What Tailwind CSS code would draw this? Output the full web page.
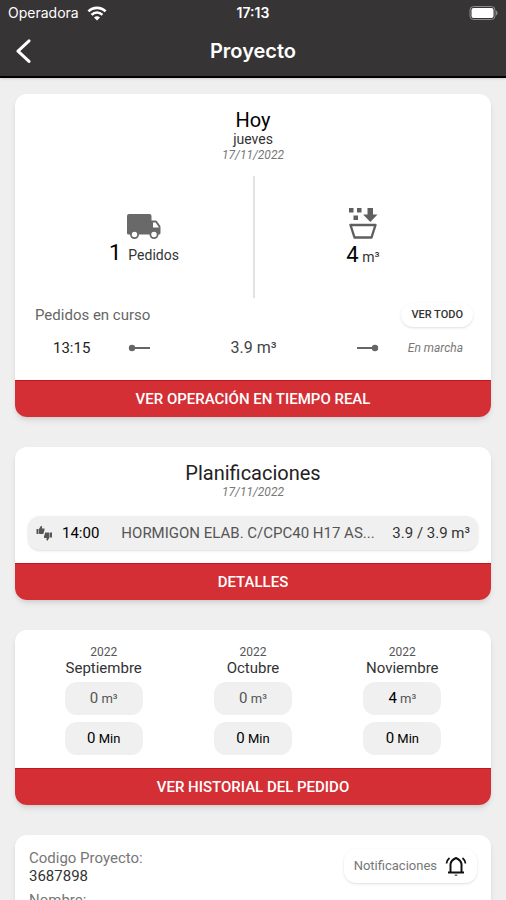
<!DOCTYPE html>
<html lang="es">
<head>
  <meta charset="UTF-8" />
  <meta name="viewport" content="width=device-width, initial-scale=1.0" />
  <title>Proyecto</title>
  <script src="https://cdn.jsdelivr.net/npm/@tailwindcss/browser@4"></script>
</head>
<body class="h-screen flex flex-col overflow-hidden bg-[#efefef] font-['Roboto',sans-serif] text-[#333]">

  <header class="shrink-0 bg-[#373435] text-white border-b-2 border-black shadow">
    <!-- barra de estado -->
    <div class="grid grid-cols-3 items-center h-[26px] px-2 font-['Inter',sans-serif] text-sm">
      <div class="flex items-center gap-2">
        <span>Operadora</span>
        <svg class="w-5 h-[15px]" viewBox="0 0 20 15" fill="none" stroke="currentColor" stroke-width="2.6">
          <path d="M1.4 5.4a12.2 12.2 0 0 1 17.2 0" />
          <path d="M4.6 8.8a7.6 7.6 0 0 1 10.8 0" />
          <path d="M10 14.6l-3-3.2a4.2 4.2 0 0 1 6 0z" fill="currentColor" stroke="none" />
        </svg>
      </div>
      <span class="text-center font-semibold">17:13</span>
      <svg class="w-[30px] h-[14px] justify-self-end" viewBox="0 0 30 14">
        <rect x="2" y="0.5" width="25" height="13" rx="3.5" fill="none" stroke="#8d8b8c" />
        <rect x="3.5" y="2" width="22" height="10" rx="2" fill="#fff" />
        <path d="M28 4.5c2 .8 2 4.2 0 5z" fill="#8d8b8c" />
      </svg>
    </div>
    <!-- título -->
    <div class="grid grid-cols-3 items-center h-[50px] px-3">
      <button type="button" aria-label="Volver" class="justify-self-start p-1">
        <svg class="w-4 h-6" viewBox="0 0 16 24" fill="none" stroke="currentColor" stroke-width="3" stroke-linecap="round" stroke-linejoin="round">
          <path d="M13 1.8L2 12.2l11 10.2" />
        </svg>
      </button>
      <h1 class="text-center text-xl leading-6 font-semibold font-['Inter',sans-serif]">Proyecto</h1>
    </div>
  </header>

  <main class="flex flex-col gap-[30px] px-[15px] pt-4">

    <!-- Hoy -->
    <section class="shrink-0 bg-white rounded-xl overflow-hidden shadow-md">
      <div class="pt-4 text-center">
        <h2 class="text-xl leading-5 text-black">Hoy</h2>
        <p class="text-sm leading-[18px]">jueves</p>
        <p class="text-xs leading-[14px] italic text-[#777]">17/11/2022</p>
      </div>
      <div class="grid grid-cols-2 h-[122px] mt-[14px]">
        <div class="flex flex-col items-center justify-end gap-0.5 pb-[31px] pl-5">
          <svg class="w-9 h-[26px]" viewBox="0 0 36 26" fill="#696969">
            <path d="M3 1h20.500a2 2 0 0 1 2 2v4.500h4a2 2 0 0 1 1.500.7l3 4.300a3 3 0 0 1 .5 1.600V20a1.600 1.600 0 0 1-1.600 1.600H2.500A1.500 1.500 0 0 1 1 20V3a2 2 0 0 1 2-2z" />
            <path d="M27 9.500v5h6l-3.400-5z" fill="#fff" />
            <circle cx="8.500" cy="21.500" r="3.600" fill="#fff" stroke="#696969" stroke-width="1.800" />
            <circle cx="28" cy="21.500" r="3.600" fill="#fff" stroke="#696969" stroke-width="1.800" />
          </svg>
          <p class="text-sm leading-[24px]"><span class="text-[22px] text-black">1</span>&nbsp; Pedidos</p>
        </div>
        <div class="flex flex-col items-center justify-end gap-1 pb-[29px] pr-[20px] border-l-2 border-[#e2e2e2]">
          <svg class="w-[30px] h-8" viewBox="0 0 30 32" fill="#5f5f5f">
            <rect x="1" y="1" width="4.500" height="4.500" />
            <rect x="9" y="1" width="4.500" height="4.500" />
            <rect x="5.500" y="8.500" width="4.500" height="4.500" />
            <path d="M19.500 1h5.500v6.500h4.500l-7.200 7.500-7.200-7.500h4.400z" />
            <path d="M2.500 18h25l-4 12.500h-17z" fill="none" stroke="#5f5f5f" stroke-width="2.400" stroke-linejoin="round" />
          </svg>
          <p class="text-sm leading-[24px]"><span class="text-[22px] text-black">4</span> m³</p>
        </div>
      </div>
      <div class="flex items-center justify-between pt-[5px] px-5">
        <h3 class="text-[15px] text-[#666]">Pedidos en curso</h3>
        <button type="button" class="h-6 px-[10px] -mr-0.5 rounded-full bg-white text-[11px] font-medium shadow">VER TODO</button>
      </div>
      <div class="grid grid-cols-[58px_1fr_64px] items-center h-[42px] pl-[28px] pr-5">
        <span class="pl-[10px] text-[15px] text-[#222]">13:15</span>
        <div class="grid grid-cols-[1fr_auto_1fr] items-center pl-[27px] pr-7 text-[#666]">
          <svg class="w-[22px] h-2" viewBox="0 0 22 8" fill="currentColor">
            <circle cx="4" cy="4" r="3.200" />
            <rect x="4" y="3" width="18" height="2" />
          </svg>
          <span class="text-base text-[#444]">3.9 m³</span>
          <svg class="w-[22px] h-2 justify-self-end" viewBox="0 0 22 8" fill="currentColor">
            <circle cx="18" cy="4" r="3.200" />
            <rect x="0" y="3" width="18" height="2" />
          </svg>
        </div>
        <span class="text-xs italic text-right pr-2 whitespace-nowrap text-[#777]">En marcha</span>
      </div>
      <button type="button" class="block w-full h-[37px] mt-[11px] bg-[#d32f35] border-t border-[#c4161d] text-white text-[15px] font-medium">VER OPERACIÓN EN TIEMPO REAL</button>
    </section>

    <!-- Planificaciones -->
    <section class="shrink-0 bg-white rounded-xl overflow-hidden shadow-md">
      <div class="pt-4 text-center">
        <h2 class="text-xl leading-5 text-[#222]">Planificaciones</h2>
        <p class="text-xs leading-[18px] italic text-[#777]">17/11/2022</p>
      </div>
      <div class="flex items-center h-[34px] mt-[15px] mx-[13px] px-2 rounded-xl bg-[#f0f0f0] shadow-sm text-[15px]">
        <svg class="w-4 h-4 shrink-0" viewBox="0 0 16 16" fill="#555">
          <path d="M.5 4h2v5h-2zM3 4L5 .8l1.200.700-.4 2H8.500v1.500L7.300 9H3.500L3 8.500z" />
          <path d="M16 12.500h-2v-5h2zM13.500 12.500l-2 3.200-1.200-.7.400-2H8v-1.500l1.200-4H13l.5.500z" />
        </svg>
        <span class="ml-[10px] text-black">14:00</span>
        <span class="ml-[22px] flex-1 truncate text-[#555]">HORMIGON ELAB. C/CPC40 H17 AS...</span>
        <span class="ml-3 whitespace-nowrap">3.9 / 3.9 m³</span>
      </div>
      <button type="button" class="block w-full h-[37px] mt-[13px] bg-[#d32f35] border-t border-[#c4161d] text-white text-[15px] font-medium">DETALLES</button>
    </section>

    <!-- Historial -->
    <section class="shrink-0 bg-white rounded-xl overflow-hidden shadow-md">
      <div class="grid grid-cols-3 px-[14px] pt-[14px] text-center">
        <div class="flex flex-col items-center">
          <p class="text-xs leading-4 text-[#555]">2022</p>
          <h3 class="text-[15px] leading-4">Septiembre</h3>
          <p class="w-[78px] mt-[6px] rounded-xl bg-[#f0f0f0] text-[13px] leading-8 text-[#555]"><span class="text-[15px]">0</span> m³</p>
          <p class="w-[78px] mt-[7px] rounded-xl bg-[#f0f0f0] text-[13px] leading-8 text-black"><span class="text-[15px]">0</span> Min</p>
        </div>
        <div class="flex flex-col items-center">
          <p class="text-xs leading-4 text-[#555]">2022</p>
          <h3 class="text-[15px] leading-4">Octubre</h3>
          <p class="w-[78px] mt-[6px] rounded-xl bg-[#f0f0f0] text-[13px] leading-8 text-[#555]"><span class="text-[15px]">0</span> m³</p>
          <p class="w-[78px] mt-[7px] rounded-xl bg-[#f0f0f0] text-[13px] leading-8 text-black"><span class="text-[15px]">0</span> Min</p>
        </div>
        <div class="flex flex-col items-center">
          <p class="text-xs leading-4 text-[#555]">2022</p>
          <h3 class="text-[15px] leading-4">Noviembre</h3>
          <p class="w-[78px] mt-[6px] rounded-xl bg-[#f0f0f0] text-[13px] leading-8 text-[#555]"><span class="text-[15px] text-black">4</span> m³</p>
          <p class="w-[78px] mt-[7px] rounded-xl bg-[#f0f0f0] text-[13px] leading-8 text-black"><span class="text-[15px]">0</span> Min</p>
        </div>
      </div>
      <button type="button" class="block w-full h-[37px] mt-[13px] bg-[#d32f35] border-t border-[#c4161d] text-white text-[15px] font-medium">VER HISTORIAL DEL PEDIDO</button>
    </section>

    <!-- Datos del proyecto -->
    <section class="shrink-0 bg-white rounded-xl overflow-hidden shadow-md">
      <div class="flex items-start justify-between px-[14px] pt-[14px] pb-4">
        <dl class="text-[15px] leading-[18px]">
          <dt class="text-[#777]">Codigo Proyecto:</dt>
          <dd>3687898</dd>
          <dt class="mt-[6px] text-[#777]">Nombre:</dt>
          <dd>Proyecto</dd>
        </dl>
        <button type="button" class="flex items-center gap-2 h-[34px] px-[10px] rounded-xl bg-white text-[13px] text-[#777] shadow">
          Notificaciones
          <svg class="w-[22px] h-[22px]" viewBox="0 0 22 22" fill="none" stroke="#111" stroke-width="2">
            <path d="M3 17.500h16" />
            <path d="M5.500 17.500V9.500c0-3 2-5 5.500-6.500 3.500 1.500 5.500 3.500 5.500 6.500v8" />
            <path d="M4.500 3A8 8 0 0 0 1.500 8.500M17.500 3a8 8 0 0 1 3 5.500" stroke-width="1.700" />
            <path d="M9.500 19.500h3a1.500 1.500 0 0 1-3 0z" fill="#555" stroke="none" />
          </svg>
        </button>
      </div>
    </section>
  </main>

</body>
</html>
